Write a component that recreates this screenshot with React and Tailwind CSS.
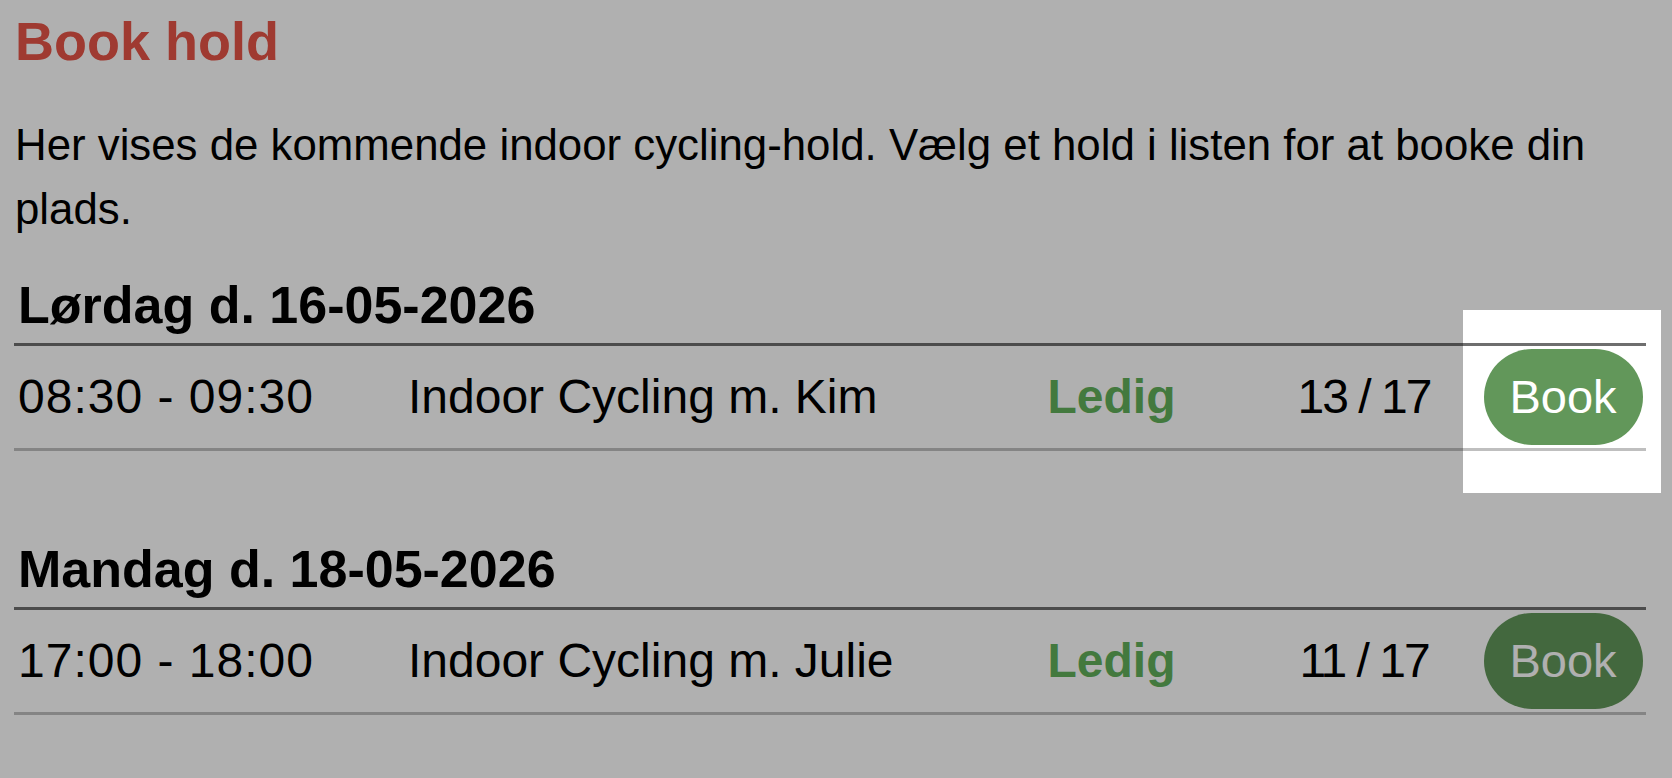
const sessions = [
  {
    date: 'Lørdag d. 16-05-2026',
    time: '08:30 - 09:30',
    title: 'Indoor Cycling m. Kim',
    status: 'Ledig',
    seats: '13 / 17',
    highlight: true,
  },
  {
    date: 'Mandag d. 18-05-2026',
    time: '17:00 - 18:00',
    title: 'Indoor Cycling m. Julie',
    status: 'Ledig',
    seats: '11 / 17',
    highlight: false,
  },
];

function SessionDay({ s, first }) {
  return (
    <div className={first ? 'mt-[34px]' : 'mt-[88px]'}>
      <h3 className="pl-[4px] text-[52px] leading-[60px] font-bold text-black">{s.date}</h3>
      <div className="mt-[8px] grid grid-cols-[390px_571px_273px_232px_166px] border-t-[3px] border-b-[3px] border-t-[#6e6e6e] border-b-[#bfbfbf] text-[48px] text-black">
        <div className="flex items-center pl-[4px] tracking-[1px]">{s.time}</div>
        <div className="flex items-center pl-[4px]">{s.title}</div>
        <div className="flex items-center justify-center font-bold text-[#62b05a]">{s.status}</div>
        <div className="flex items-center justify-center tracking-[-2px]">{s.seats}</div>
        <div className="relative flex items-center justify-center py-[3px]">
          <button className="h-[96px] w-[159px] rounded-full bg-[#62975a] text-[47px] text-white">
            Book
          </button>
          {s.highlight && (
            <div className="pointer-events-none absolute z-10 top-[-36px] bottom-[-45px] left-[-17px] right-[-15px] shadow-[0_0_0_9999px_rgba(0,0,0,0.31)]" />
          )}
        </div>
      </div>
    </div>
  );
}

export default function App() {
  return (
    <div className="isolate min-h-screen bg-white pl-[14px] pr-[26px] pt-[9px] font-['Liberation_Sans',Arial,sans-serif]">
      <h2 className="pl-[1px] text-[54px] leading-[64px] font-bold text-[#e65547]">Book hold</h2>
      <p className="mt-[40px] pl-[1px] text-[43.8px] leading-[64px] text-black">
        Her vises de kommende indoor cycling-hold. Vælg et hold i listen for at booke din plads.
      </p>
      {sessions.map((s, i) => (
        <SessionDay key={s.date} s={s} first={i === 0} />
      ))}
    </div>
  );
}
